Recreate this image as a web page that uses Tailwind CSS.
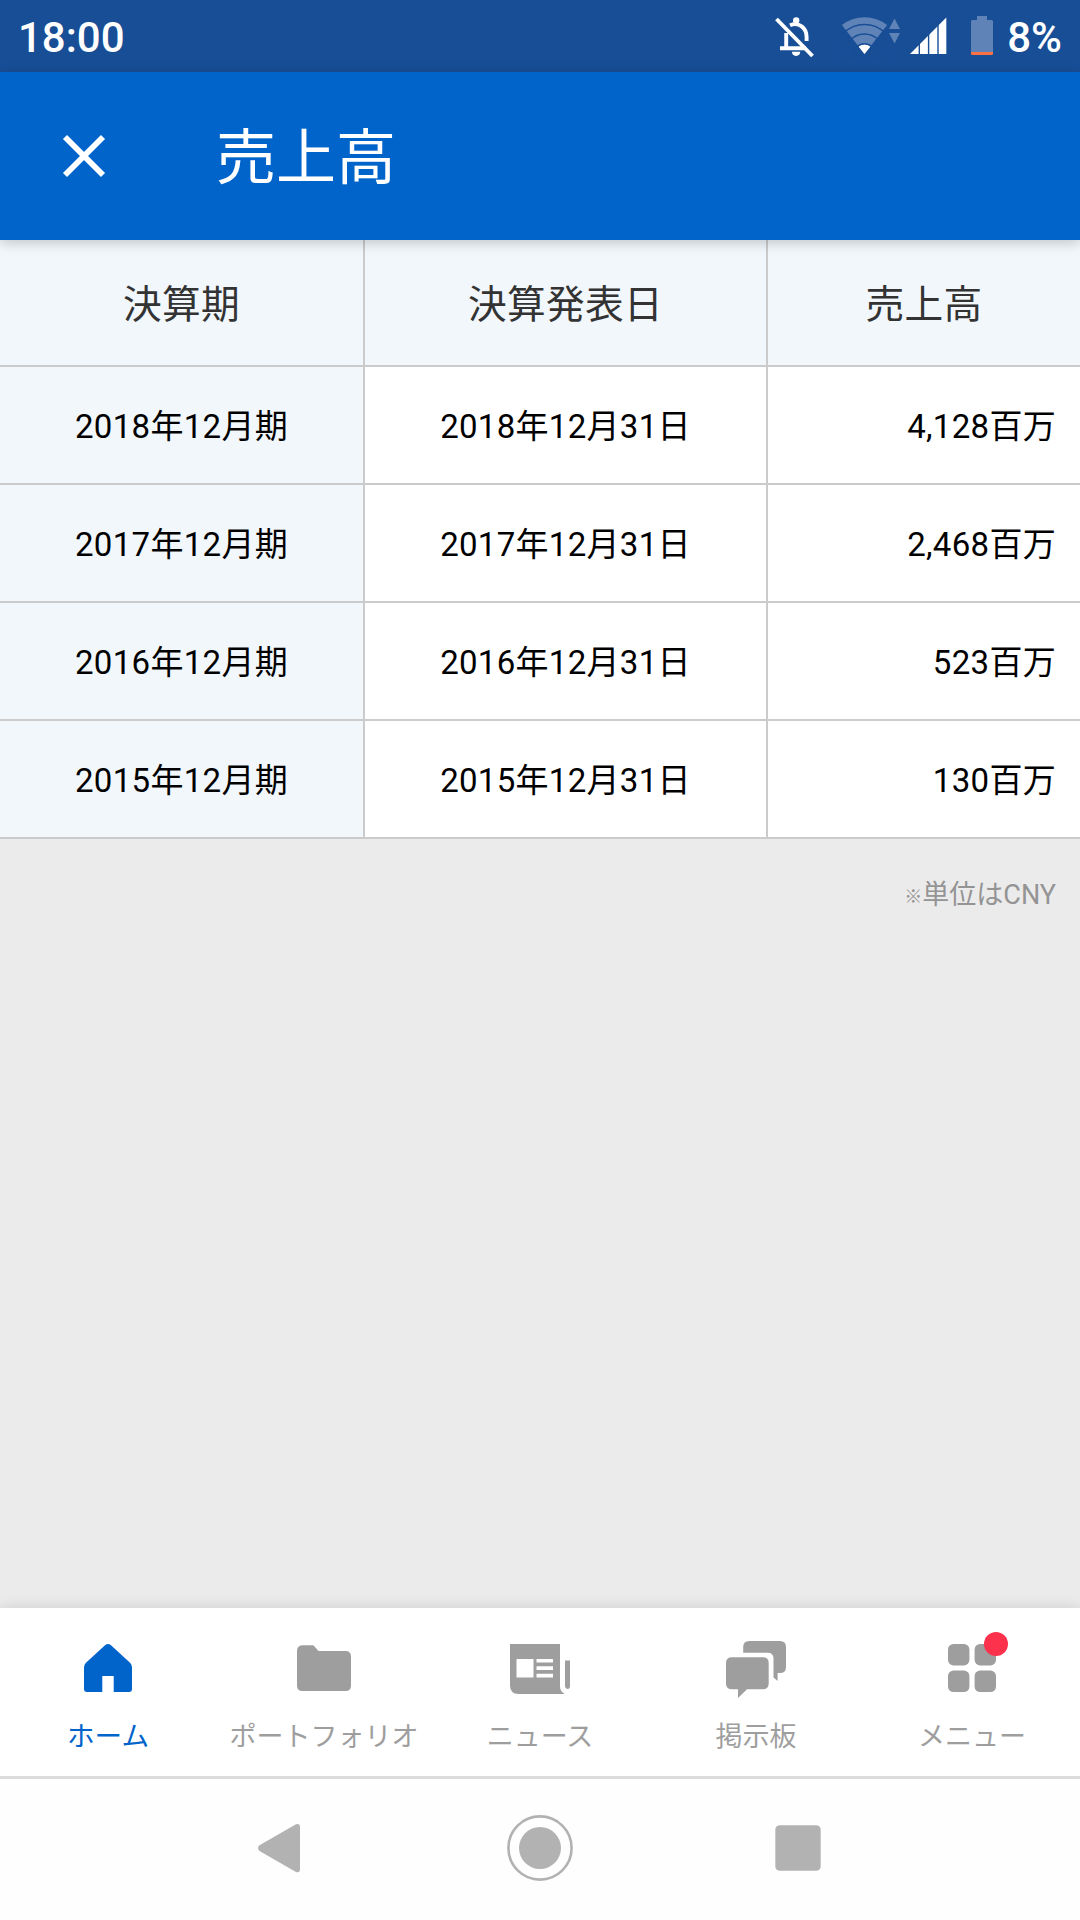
<!DOCTYPE html>
<html lang="ja">
<head>
<meta charset="utf-8">
<title>売上高</title>
<script src="https://cdn.jsdelivr.net/npm/@tailwindcss/browser@4"></script>
</head>
<body class="w-[1080px] h-[1920px] overflow-hidden flex flex-col bg-[#ebebeb] font-[Roboto,'Noto_Sans_CJK_JP',sans-serif]">
  <!-- Status bar -->
  <div class="h-[72px] shrink-0 flex items-center justify-between bg-[#184e96] text-white pl-[18px] pr-[18px] text-[42px] leading-[72px] font-medium">
    <span class="pt-[4px]">18:00</span>
    <div class="flex items-center h-[72px]">
      <svg class="block" width="240" height="72" viewBox="0 0 240 72" fill="none">
        <g stroke="#fff" stroke-width="3.9">
          <path d="M16.5 19 52.5 56"/>
          <path d="M26.2 33V47.5M20 48.2H46M30 25.3C39 21.5 46.6 28 46.6 37V41"/>
        </g>
        <circle cx="36.2" cy="20.5" r="3.2" fill="#fff"/>
        <path d="M32 51.8H40.2A4.1 4.1 0 0 1 32 51.8Z" fill="#fff"/>
        <path d="M104.5 54 81.9 25A37 37 0 0 1 127.1 25Z" fill="#5f83b7"/>
        <path d="M104.5 54 98.5 46.5A9.5 9.5 0 0 1 110.5 46.5Z" fill="#fff"/>
        <g stroke="#184e96" stroke-width="1.4">
          <circle cx="104.5" cy="54" r="29.5"/><circle cx="104.5" cy="54" r="20"/><circle cx="104.5" cy="54" r="10.3"/>
        </g>
        <path d="M134.5 18.5 140 29H129ZM129 33H140L134.5 43.5Z" fill="#5f83b7"/>
        <path d="M150 54 186.3 17.5V54Z" fill="#fff"/>
        <path d="M159.3 17V55M168.6 17V55M178 17V55" stroke="#184e96" stroke-width="1.4"/>
        <path d="M217 16H227V20H231.5Q233 20 233 21.5V52H211V21.5Q211 20 212.5 20H217Z" fill="#5f83b7"/>
        <path d="M211 52H233V53.5Q233 55 231.5 55H212.5Q211 55 211 53.5Z" fill="#ff7043"/>
      </svg>
      <span class="pt-[4px] pl-[7px]">8%</span>
    </div>
  </div>
  <!-- App bar -->
  <header class="relative z-10 h-[168px] shrink-0 flex items-center bg-[#0064cb] text-white shadow-[0_3px_12px_rgba(0,0,0,0.2)]">
    <svg class="ml-[48px] block" width="72" height="72" viewBox="0 0 72 72"><path d="M17 17 55 55M55 17 17 55" stroke="#fff" stroke-width="5.8"/></svg>
    <h1 class="ml-[96px] pt-[6px] text-[60px] leading-[72px] font-normal">売上高</h1>
  </header>
  <!-- Results table -->
  <div class="shrink-0 grid grid-cols-[365px_403px_312px] grid-rows-[127px_118px_118px_118px_118px] bg-white text-black text-[33px] tracking-[0.3px] *:flex *:items-center *:justify-center *:pt-[3px] *:border-b-2 *:border-[#cbcbcb]">
    <div class="pt-[5px]! border-r-2 bg-[#f1f7fb] text-[#333] text-[38.7px]">決算期</div>
    <div class="pt-[5px]! border-r-2 bg-[#f1f7fb] text-[#333] text-[38.7px]">決算発表日</div>
    <div class="pt-[5px]! bg-[#f1f7fb] text-[#333] text-[38.7px]">売上高</div>
    <div class="border-r-2 bg-[#f1f7fb]">2018年12月期</div><div class="border-r-2">2018年12月31日</div><div class="justify-end! pr-[24px]">4,128百万</div>
    <div class="border-r-2 bg-[#f1f7fb]">2017年12月期</div><div class="border-r-2">2017年12月31日</div><div class="justify-end! pr-[24px]">2,468百万</div>
    <div class="border-r-2 bg-[#f1f7fb]">2016年12月期</div><div class="border-r-2">2016年12月31日</div><div class="justify-end! pr-[24px]">523百万</div>
    <div class="border-r-2 bg-[#f1f7fb]">2015年12月期</div><div class="border-r-2">2015年12月31日</div><div class="justify-end! pr-[24px]">130百万</div>
  </div>
  <p class="mt-[36px] pr-[24px] text-right text-[27px] leading-[40px] text-[#949494]"><span class="relative -top-px text-[18px] font-bold">※</span>単位はCNY</p>
  <!-- Tab bar -->
  <nav class="mt-auto h-[168px] shrink-0 grid grid-cols-5 bg-white text-[#9e9e9e] text-[27px] leading-[40px] shadow-[0_0_14px_rgba(0,0,0,0.13)] *:flex *:flex-col *:items-center *:pt-[24px] *:gap-[13px] *:whitespace-nowrap">
    <a class="text-[#0064cb]">
      <svg width="72" height="72" viewBox="0 0 72 72" fill="currentColor"><path d="M33 13.2Q36 10.8 39 13.2L58.3 31Q60 33 60 35.5V57Q60 60 57 60H41.7V44H30.3V60H15Q12 60 12 57V35.5Q12 33 13.7 31Z"/></svg>
      <span class="text-[27.6px]">ホーム</span>
    </a>
    <a>
      <svg width="72" height="72" viewBox="0 0 72 72" fill="currentColor"><path d="M15 13.3H24.5Q25.7 13.3 26.5 14.5L30.5 19H57.5Q63 19 63 24.5V53.5Q63 59 57.5 59H14.5Q9 59 9 53.5V19Q9 13.3 15 13.3Z"/></svg>
      <span>ポートフォリオ</span>
    </a>
    <a>
      <svg width="72" height="72" viewBox="0 0 72 72" fill="currentColor"><path fill-rule="evenodd" d="M6 12H56V54Q56 59.5 60.8 62H14.5Q6 62 6 53.5ZM12.5 27V45.5H29.5V27ZM32.5 27V30.5H49V27ZM32.5 34.3V38H49V34.3ZM32.5 41.8V45.5H49V41.8ZM61 28.5H66V54Q66 57 63.5 57 61 56.5 61 53.5Z"/></svg>
      <span>ニュース</span>
    </a>
    <a>
      <svg width="72" height="72" viewBox="0 0 72 72" fill="currentColor"><path d="M12 25.2H42.8Q48.7 25.2 48.7 31V51.5Q48.7 57.3 42.8 57.3H27L18 66V57.3H12Q6 57.3 6 51.5V31Q6 25.2 12 25.2Z"/><path d="M23.2 20.7V15Q23.2 9 29.2 9H60Q66 9 66 15V35Q66 41 60 41H57.6V49L53.5 45.5V26.5Q53.5 20.7 47.5 20.7Z"/></svg>
      <span>掲示板</span>
    </a>
    <a>
      <span class="relative block size-[72px]">
        <svg width="72" height="72" viewBox="0 0 72 72" fill="currentColor"><rect x="12" y="12" width="21.4" height="21.4" rx="5.5"/><rect x="38.6" y="12" width="21.4" height="21.4" rx="5.5"/><rect x="12" y="38.6" width="21.4" height="21.4" rx="5.5"/><rect x="38.6" y="38.6" width="21.4" height="21.4" rx="5.5"/></svg>
        <span class="absolute left-[48px] top-0 size-[24px] rounded-full bg-[#fc314c]"></span>
      </span>
      <span>メニュー</span>
    </a>
  </nav>
  <!-- System navigation -->
  <div class="h-[144px] shrink-0 flex items-center justify-center gap-[180px] pb-[3px] border-t-[3px] border-[#dcdcdc] bg-[#fefefe]">
    <svg width="78" height="78" viewBox="0 0 78 78" fill="#b2b2b2"><path d="M16.5 42Q13.5 39.2 16.5 36.3L53 15.3Q57 14 57 17.5V60.5Q57 64 53 63Z"/></svg>
    <svg width="78" height="78" viewBox="0 0 78 78"><circle cx="39" cy="39" r="31.6" fill="none" stroke="#b2b2b2" stroke-width="2.6"/><circle cx="39" cy="39" r="21" fill="#b2b2b2"/></svg>
    <svg width="78" height="78" viewBox="0 0 78 78"><rect x="16.3" y="16.3" width="45.4" height="45.4" rx="4.5" fill="#b2b2b2"/></svg>
  </div>
</body>
</html>
